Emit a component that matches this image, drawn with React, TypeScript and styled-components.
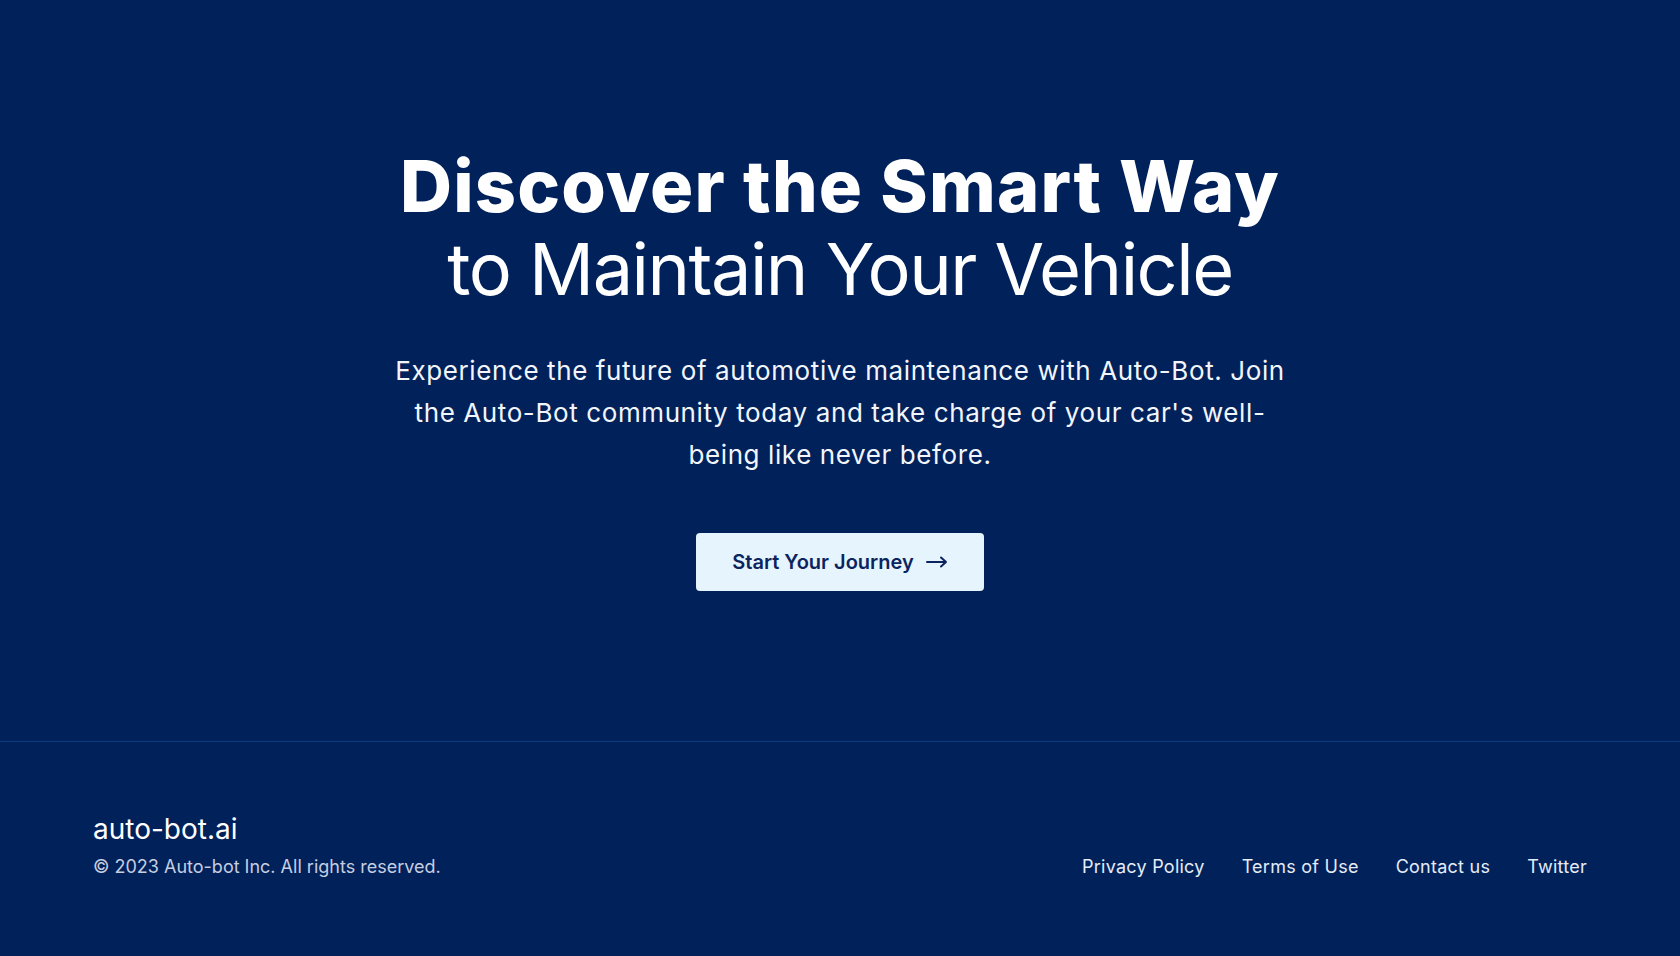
import styled, { createGlobalStyle } from "styled-components";

const GlobalStyle = createGlobalStyle`
  html, body {
    margin: 0;
    padding: 0;
    background: #01215b;
  }
  * {
    box-sizing: border-box;
  }
`;

const Page = styled.div`
  min-height: 100vh;
  display: flex;
  flex-direction: column;
  background: #01215b;
  font-family: Inter, "Noto Sans", sans-serif;
  color: #ffffff;
`;

const Hero = styled.section`
  height: 742px;
  display: flex;
  flex-direction: column;
  align-items: center;
  padding-top: 144px;
  border-bottom: 1px solid #0b3a7f;
`;

const Title = styled.h1`
  margin: 0;
  text-align: center;
  font-size: 72px;
  line-height: 83px;
  color: #ffffff;
`;

const TitleLine = styled.span<{ $bold?: boolean }>`
  display: block;
  font-weight: ${(p) => (p.$bold ? 800 : 400)};
  letter-spacing: ${(p) => (p.$bold ? "1.2px" : "-1.5px")};
`;

const Lead = styled.p`
  margin: 40px 0 0;
  max-width: 910px;
  text-align: center;
  font-size: 26px;
  line-height: 42px;
  letter-spacing: 0.6px;
  font-weight: 400;
  color: #f2f5fa;
`;

const CtaButton = styled.button`
  margin-top: 57px;
  display: flex;
  align-items: center;
  gap: 12px;
  height: 58px;
  padding: 0 36px;
  background: #e6f4fd;
  border: none;
  border-radius: 4px;
  font-family: Inter, "Noto Sans", sans-serif;
  font-size: 20px;
  font-weight: 600;
  color: #0b2460;
  cursor: pointer;
`;

const Footer = styled.footer`
  flex: 1;
  display: flex;
  justify-content: space-between;
  align-items: flex-end;
  padding: 0 93px 77px;
`;

const Brand = styled.div`
  display: flex;
  flex-direction: column;
`;

const Logo = styled.div`
  font-size: 28px;
  line-height: 36px;
  font-weight: 400;
  color: #ffffff;
`;

const Copy = styled.div`
  margin-top: 8px;
  font-size: 18px;
  line-height: 24px;
  color: #c6cee0;
`;

const Links = styled.nav`
  display: flex;
  gap: 37px;
`;

const FooterLink = styled.a`
  font-size: 18px;
  line-height: 24px;
  letter-spacing: 0.25px;
  color: #e4ecf7;
  text-decoration: none;
`;

const Arrow = () => (
  <svg width="22" height="12" viewBox="0 0 22 12" fill="none">
    <path d="M1 6h19M15 1.5L20 6l-5 4.5" stroke="#0b2460" strokeWidth="2" strokeLinecap="round" strokeLinejoin="round" />
  </svg>
);

export default function App() {
  return (
    <Page>
      <GlobalStyle />
      <Hero>
        <Title>
          <TitleLine $bold>Discover the Smart Way</TitleLine>
          <TitleLine>to Maintain Your Vehicle</TitleLine>
        </Title>
        <Lead>
          Experience the future of automotive maintenance with Auto-Bot. Join the Auto-Bot community today and take charge of your car's well-being like never before.
        </Lead>
        <CtaButton>
          Start Your Journey
          <Arrow />
        </CtaButton>
      </Hero>
      <Footer>
        <Brand>
          <Logo>auto-bot.ai</Logo>
          <Copy>© 2023 Auto-bot Inc. All rights reserved.</Copy>
        </Brand>
        <Links>
          <FooterLink href="#">Privacy Policy</FooterLink>
          <FooterLink href="#">Terms of Use</FooterLink>
          <FooterLink href="#">Contact us</FooterLink>
          <FooterLink href="#">Twitter</FooterLink>
        </Links>
      </Footer>
    </Page>
  );
}
